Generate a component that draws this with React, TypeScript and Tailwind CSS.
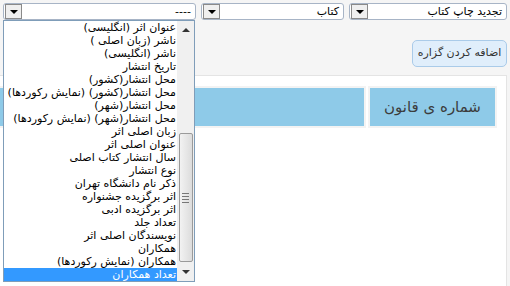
import React from 'react'

const fields = [
  'عنوان اثر (انگلیسی)',
  'ناشر (زبان اصلی )',
  'ناشر (انگلیسی)',
  'تاریخ انتشار',
  'محل انتشار(کشور)',
  'محل انتشار(کشور) (نمایش رکوردها)',
  'محل انتشار(شهر)',
  'محل انتشار(شهر) (نمایش رکوردها)',
  'زبان اصلی اثر',
  'عنوان اصلی اثر',
  'سال انتشار کتاب اصلی',
  'نوع انتشار',
  'ذکر نام دانشگاه تهران',
  'اثر برگزیده جشنواره',
  'اثر برگزیده ادبی',
  'تعداد جلد',
  'نویسندگان اصلی اثر',
  'همکاران',
  'همکاران (نمایش رکوردها)',
  'تعداد همکاران',
]

function SelectBox({ value, width }: { value: string; width: string }) {
  return (
    <div
      className={`${width} flex h-[17px] items-center rounded-[3px] border border-[#a7b4c6] bg-white`}
      dir="ltr"
    >
      <div className="ml-[1px] flex h-[15px] w-[17px] items-center justify-center border border-[#8a8a8a] bg-[#efefef]">
        <span className="h-0 w-0 border-x-[4px] border-t-[4px] border-x-transparent border-t-black" />
      </div>
      <div className="flex-1 truncate pr-[4px] text-right text-[11px] leading-[15px] text-black" dir="rtl">
        {value}
      </div>
    </div>
  )
}

export default function App() {
  const selected = fields.length - 1

  return (
    <div
      className="relative h-[286px] w-[510px] overflow-hidden bg-[#f5f5f5]"
      dir="rtl"
      style={{ fontFamily: '"DejaVu Sans", Tahoma, sans-serif' }}
    >
      {/* top selects */}
      <div className="flex gap-[5px] pr-[3px] pt-[3px]">
        <SelectBox value="تجدید چاپ کتاب" width="w-[158px]" />
        <SelectBox value="کتاب" width="w-[143px]" />
        <SelectBox value="----" width="w-[193px]" />
      </div>

      <div className="flex pr-[3px] pt-[20px]">
        <button className="h-[27px] w-[95px] rounded-[5px] border border-[#aacbe9] bg-[#e0eefb] text-[11px] text-[#333]">
          اضافه کردن گزاره
        </button>
      </div>

      {/* panel */}
      <div className="mt-[8px] mr-[3px] h-[220px] border-r border-t border-[#e4e4e4] bg-white pr-[9px] pt-[10px]">
        <div className="flex gap-[2px]">
          <div className="w-[129px] bg-[#f3f3f3] p-[2px]">
            <div className="flex h-[38px] items-center justify-center bg-[#8ecae8] text-[15px] text-[#3c3c3c]">
              شماره ی قانون
            </div>
          </div>
          <div className="flex-1 bg-[#f3f3f3] py-[2px] pr-[2px]">
            <div className="h-[38px] bg-[#8ecae8]" />
          </div>
        </div>
      </div>

      {/* open dropdown list */}
      <div
        className="absolute left-[3px] top-[20px] flex h-[262px] w-[192px] border border-[#7f9db9] bg-white"
        dir="ltr"
      >
        <div className="flex flex-1 flex-col" dir="rtl">
          {fields.map((f, i) => (
            <div
              key={f}
              className={`h-[13px] whitespace-nowrap pr-[1px] text-right text-[11px] leading-[13px] ${
                i === selected ? 'bg-[#3399ff] text-white' : 'text-black'
              }`}
            >
              {f}
            </div>
          ))}
        </div>
        <div className="flex w-[17px] flex-col items-center bg-[#f0f0f0]">
          <div className="flex h-[17px] items-center justify-center">
            <span className="h-0 w-0 border-x-[4px] border-b-[4px] border-x-transparent border-b-[#333]" />
          </div>
          <div className="h-[95px]" />
          <div className="flex h-[129px] w-[14px] flex-col items-center justify-center gap-[2px] rounded-[2px] border border-[#9a9a9a] bg-gradient-to-r from-[#f2f2f2] to-[#dcdcdc]">
            <span className="h-[1px] w-[7px] bg-[#777]" />
            <span className="h-[1px] w-[7px] bg-[#777]" />
            <span className="h-[1px] w-[7px] bg-[#777]" />
            <span className="h-[1px] w-[7px] bg-[#777]" />
          </div>
          <div className="flex flex-1 items-center justify-center">
            <span className="h-0 w-0 border-x-[4px] border-t-[4px] border-x-transparent border-t-[#333]" />
          </div>
        </div>
      </div>
    </div>
  )
}
